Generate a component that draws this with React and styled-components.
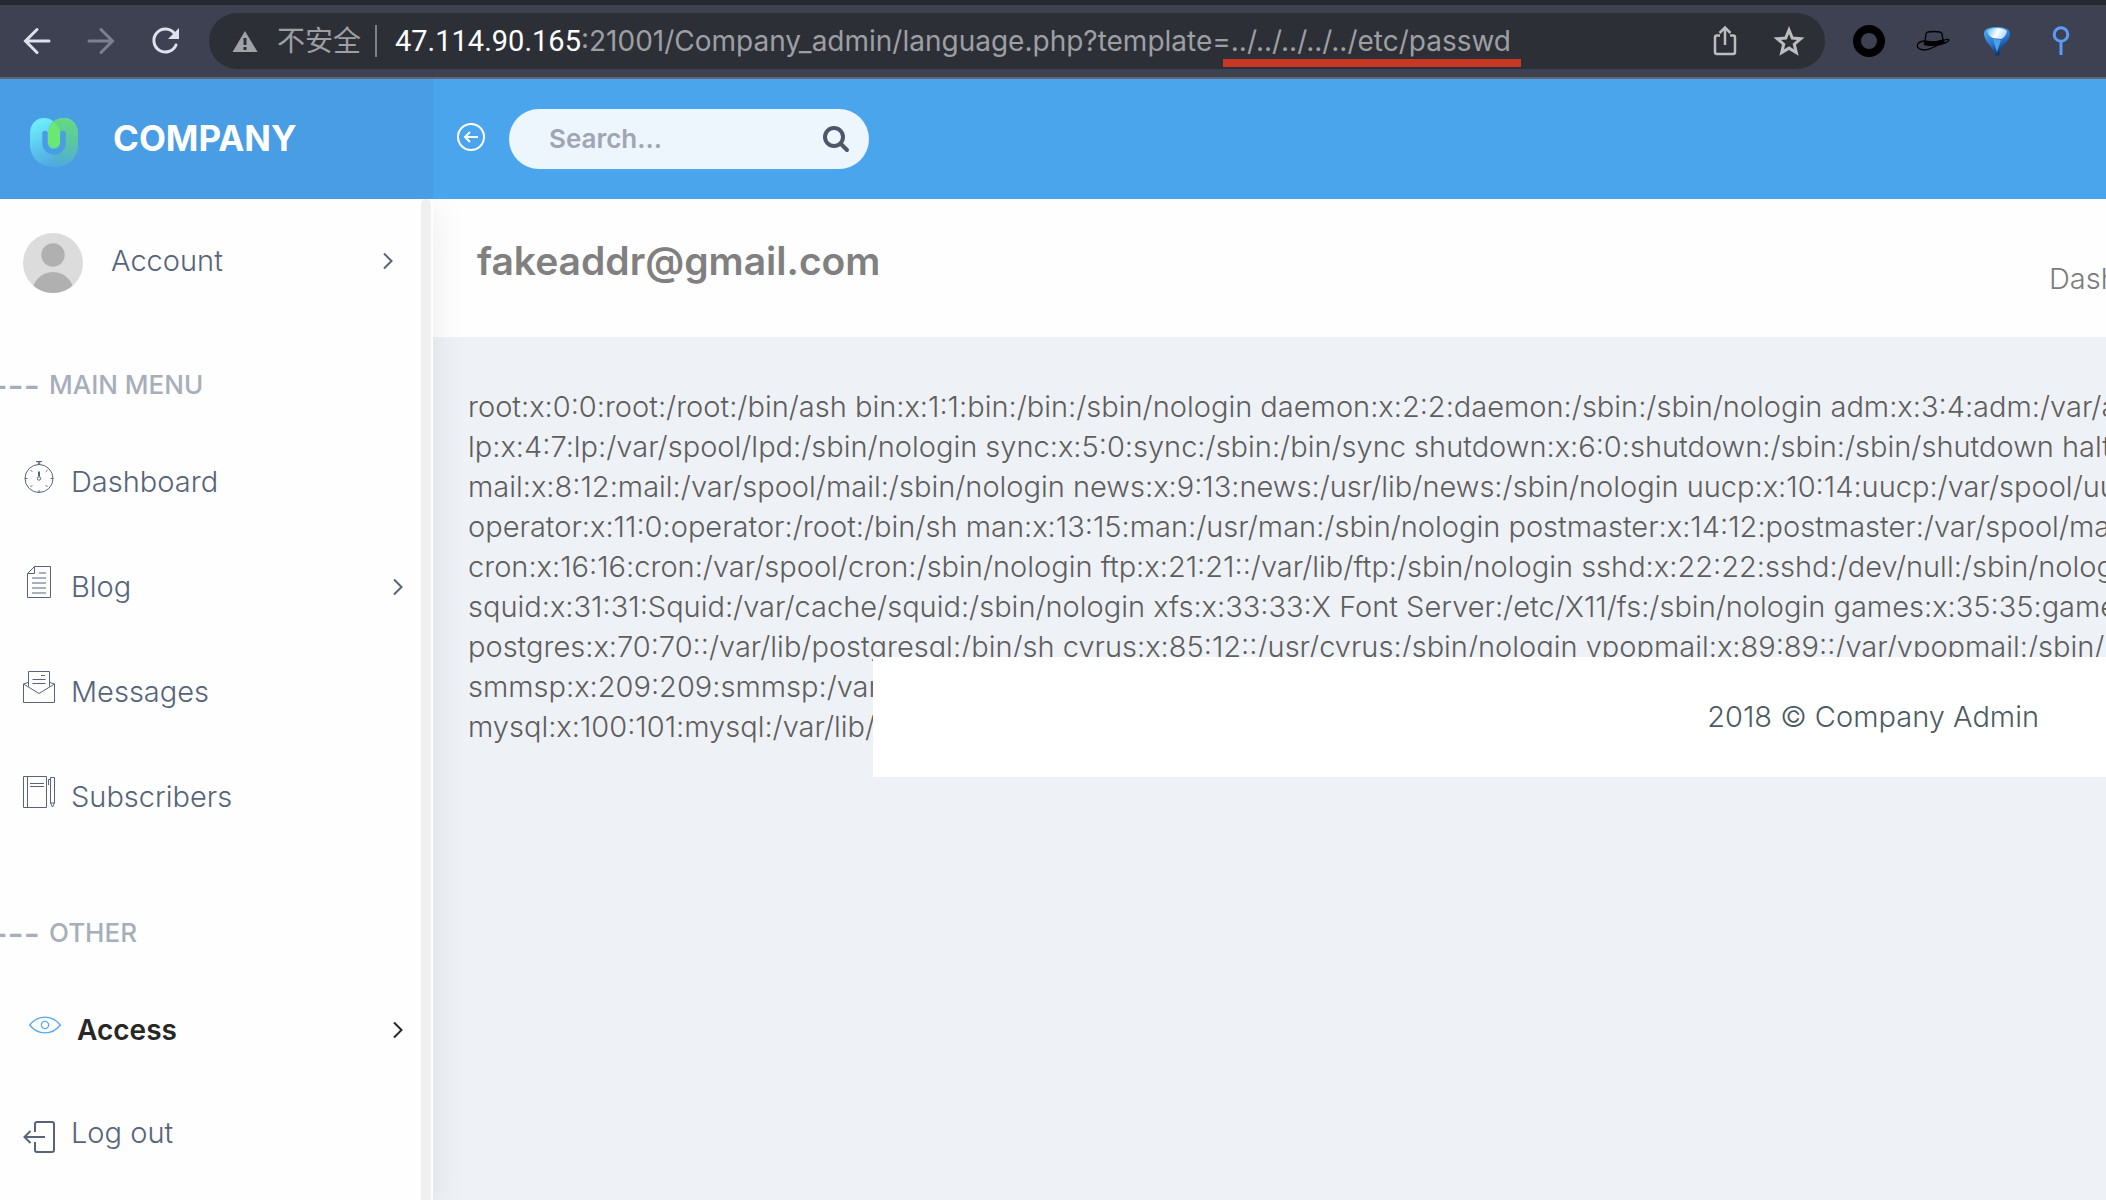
import React from "react";
import styled, { createGlobalStyle } from "styled-components";

const GlobalStyle = createGlobalStyle`
  *, *::before, *::after { box-sizing: border-box; }
  body {
    margin: 0;
    overflow: hidden;
    background: #eef1f6;
    font-family: Inter, "Noto Sans CJK SC", sans-serif;
    font-size: 29px;
    font-weight: 300;
    line-height: 40px;
  }
  a { color: inherit; text-decoration: none; }
  svg { display: block; flex: none; }
`;

const Page = styled.div`
  display: flex;
  flex-direction: column;
  min-height: 100vh;
  overflow: hidden;
`;

const IconButton = styled.button`
  display: flex;
  align-items: center;
  justify-content: center;
  flex: none;
  width: ${(p) => p.$width || 64}px;
  height: 56px;
  padding: 0;
  border: 0;
  background: none;
  color: ${(p) => p.$color || "#dfe1ec"};
`;

/* Browser chrome */
const BrowserBar = styled.div`
  display: flex;
  align-items: center;
  height: 79px;
  padding: 0 13px 0 5px;
  gap: 12px;
  border-top: 5px solid #252931;
  border-bottom: 2px solid #62676f;
  background: #3d4152;
`;

const ButtonGroup = styled.div`
  display: flex;
  flex: none;
`;

const AddressBar = styled.div`
  display: flex;
  align-items: center;
  flex: 1;
  min-width: 0;
  height: 56px;
  padding: 0 4px 0 23px;
  border-radius: 28px;
  background: #2d2f37;
  color: #9d9fa2;
  font-size: 28px;
  font-weight: 400;
  white-space: nowrap;
`;

const Insecure = styled.span`
  margin-left: 19px;
  padding-right: 14px;
`;

const Separator = styled.span`
  width: 2px;
  height: 32px;
  margin-right: 18px;
  background: #7f8186;
`;

const Url = styled.div`
  flex: 1;
  min-width: 0;
`;

const Host = styled.span`
  color: #fff;
  font-family: Roboto, sans-serif;
  font-size: 29px;
`;

const Marked = styled.span`
  position: relative;
  &::after {
    content: "";
    position: absolute;
    left: -8px;
    right: -10px;
    bottom: -9px;
    height: 8px;
    background: #c83624;
  }
`;

/* Site header */
const Header = styled.header`
  display: flex;
  height: 120px;
  background: #4ba5ed;
  color: #fff;
`;

const Brand = styled.a`
  display: flex;
  align-items: center;
  flex: none;
  gap: 35px;
  width: 433px;
  padding-left: 30px;
  background: #489de4;
  font-size: 35px;
  font-weight: 700;
`;

const BrandMark = styled.span`
  padding-top: 6px;
`;

const BrandName = styled.span`
  padding-bottom: 2px;
`;

const HeaderTools = styled.div`
  display: flex;
  align-items: center;
  flex: 1;
  gap: 24px;
  padding-left: 24px;
`;

const CollapseButton = styled(IconButton)`
  padding-bottom: 4px;
`;

const SearchForm = styled.form`
  display: flex;
  align-items: center;
  width: 360px;
  height: 60px;
  padding-left: 40px;
  border-radius: 30px;
  background: #edf5fd;
`;

const SearchInput = styled.input`
  flex: 1;
  min-width: 0;
  padding: 0 0 2px;
  border: 0;
  outline: 0;
  background: none;
  color: #50586c;
  font-family: inherit;
  font-size: 26px;
  font-weight: 600;
  &::placeholder { color: #9fa5b4; opacity: 1; }
`;

/* Body */
const Body = styled.div`
  display: flex;
  flex: 1;
`;

const Sidebar = styled.aside`
  display: flex;
  flex: none;
  width: 433px;
  z-index: 1;
  padding-right: 2px;
  background: #fefefe;
  box-shadow: 0 10px 36px rgba(0, 0, 0, 0.08);
  clip-path: inset(0 -60px 0 0);
`;

const Track = styled.div`
  width: 10px;
  border-radius: 5px 5px 0 0;
  background: #f0f0f0;
`;

const Nav = styled.nav`
  flex: 1;
  color: #56647a;
`;

const AccountLink = styled.a`
  display: flex;
  align-items: center;
  gap: 28px;
  height: 128px;
  padding: 0 27px 0 23px;
`;

const AccountRow = styled.span`
  display: flex;
  align-items: center;
  justify-content: space-between;
  flex: 1;
  padding-bottom: 4px;
`;

const Caption = styled.h2`
  display: flex;
  gap: 9px;
  margin: ${(p) => p.$top}px 0 24px;
  color: #a7aebb;
  font-size: 26px;
  font-weight: 500;
  line-height: 40px;
`;

const Dashes = styled.span`
  display: flex;
  justify-content: flex-end;
  width: 40px;
  font-size: 35px;
  white-space: nowrap;
`;

const MenuLink = styled.a`
  display: flex;
  align-items: center;
  gap: 16px;
  height: ${(p) => (p.$low ? 101 : 105)}px;
  padding: 0 17px 0 ${(p) => (p.$active ? 29 : 23)}px;
  color: ${(p) => (p.$active ? "#272727" : "inherit")};
  font-size: ${(p) => (p.$active ? 28 : 29)}px;
  font-weight: ${(p) => (p.$active ? 600 : 300)};
`;

const MenuIcon = styled.span`
  padding: ${(p) => (p.$low ? "8px 0 0" : "0 0 10px")};
  color: ${(p) => (p.$active ? "#55aaf0" : "inherit")};
`;

const MenuLabel = styled.span`
  flex: 1;
`;

const Main = styled.main`
  position: relative;
  flex: 1;
  min-width: 0;
  overflow: hidden;
`;

const TitleBar = styled.div`
  display: flex;
  align-items: center;
  justify-content: space-between;
  height: 138px;
  padding-left: 44px;
  background: #fefefe;
`;

const Title = styled.h1`
  margin: 0;
  padding-bottom: 14px;
  color: #808080;
  font-size: 39px;
  font-weight: 600;
`;

const Breadcrumb = styled.a`
  width: 57px;
  padding-top: 22px;
  overflow: hidden;
  color: #7c7c7c;
  white-space: nowrap;
`;

const FileDump = styled.div`
  padding: 50px 0 0 35px;
  color: #5e5e5e;
  white-space: nowrap;
`;

const Footer = styled.footer`
  position: absolute;
  top: 458px;
  left: 440px;
  right: 0;
  display: flex;
  align-items: center;
  justify-content: flex-end;
  height: 120px;
  padding-right: 67px;
  background: #fff;
  color: #4c5a63;
`;

const Stroke = ({ w = 32, h = 32, sw = 1, children, ...rest }) => (
  <svg width={w} height={h} viewBox={`0 0 ${w} ${h}`} fill="none" stroke="currentColor" strokeWidth={sw} aria-hidden="true" {...rest}>
    {children}
  </svg>
);

const Chevron = () => (
  <Stroke w={12} h={20} sw={2}><path d="M2 2.5 9.5 10 2 17.5" /></Stroke>
);

const Stopwatch = () => (
  <Stroke>
    <circle cx="16" cy="17.5" r="14" />
    <path d="M13 .5h6M15.3 1v3M16.7 1v3M15.5 10.500v5M16.500 10.500v5M2 17.500h2.500M27.500 17.500H30M16 29v2.500M7.500 9l1.800 1.800M24.500 9l-1.800 1.800M7.500 26l1.800-1.800M24.500 26l-1.800-1.800" />
    <circle cx="16" cy="17.500" r="1.700" />
  </Stroke>
);

const FilePage = () => (
  <Stroke>
    <path d="M11.500.5h16v31h-23V7.500zM11.500.5v7h-7" />
    <path d="M16 7h7M9 12h14M9 17h14M9 22h14M9 27h14" strokeWidth="2" opacity=".5" />
  </Stroke>
);

const OpenMail = () => (
  <Stroke>
    <path d="M5.500 15.500V.5h21v15M5 11.500 .5 13v18.500h31V13L27 11.500M.5 13 16 22.500 31.500 13M18 4.500h4M9.500 8.500h13M9.500 12.500h13" />
  </Stroke>
);

const Notebook = () => (
  <Stroke>
    <path d="M.5.5h23v31H.5zM4.500.5v31M7 7.500h14M7 10.500h14M27.500 1.500h4V27l-2 4-2-4zM25.500 9V3.500h2M27.500 27h4" />
  </Stroke>
);

const Eye = () => (
  <Stroke sw={1.3}>
    <path d="M.7 16C9 5.500 23 5.500 31.300 16 23 26.500 9 26.500 .7 16z" />
    <circle cx="16" cy="16" r="3.600" />
  </Stroke>
);

const Exit = () => (
  <Stroke sw={2}>
    <path d="M12 11V3q0-2 2-2h15q2 0 2 2v26q0 2-2 2H14q-2 0-2-2v-8M22 16H1.500M7.500 10l-6 6 6 6" />
  </Stroke>
);

const Avatar = () => (
  <svg width="60" height="60" viewBox="0 0 60 60" role="img" aria-label="Avatar">
    <clipPath id="avatarClip"><circle cx="30" cy="30" r="30" /></clipPath>
    <g clipPath="url(#avatarClip)">
      <rect width="60" height="60" fill="#dcdcdc" />
      <circle cx="30" cy="22" r="11.700" fill="#b0b0b0" />
      <circle cx="30" cy="60" r="21" fill="#b0b0b0" />
    </g>
  </svg>
);

const Logo = () => (
  <svg width="48" height="49" viewBox="0 0 48 49" fill="none" aria-hidden="true">
    <defs>
      <linearGradient id="logoBody" x1="10" y1="4" x2="26" y2="46" gradientUnits="userSpaceOnUse">
        <stop stopColor="#6cecfa" />
        <stop offset=".5" stopColor="#5cc8ee" />
        <stop offset="1" stopColor="#4fa9e0" />
      </linearGradient>
      <linearGradient id="logoArm" x1="36" y1="2" x2="32" y2="48" gradientUnits="userSpaceOnUse">
        <stop stopColor="#64d884" />
        <stop offset=".5" stopColor="#5bc4a4" />
        <stop offset="1" stopColor="#50abdb" />
      </linearGradient>
    </defs>
    <path d="M0 16C0 6 6 0 14 0q6 0 10 4 4-4 10-4c8 0 14 6 14 16v10c0 14-10 23-24 23S0 40 0 26z" fill="url(#logoBody)" />
    <path d="M18 24V16C18 6 25 0 33 0c9 0 15 6 15 16v10c0 14-10 23-24 23V32z" fill="url(#logoArm)" />
    <path d="M18 15q1-7 6-11 6 4 6 12v8a6 6 0 0 1-12 0z" fill="#6be873" />
    <path d="M15 15.500V25a9 9 0 0 0 18 0v-9.500" stroke="#489de4" strokeWidth="5.500" strokeLinecap="round" />
  </svg>
);

const BackArrow = () => (
  <Stroke w={28} sw={3} strokeLinecap="round"><path d="M26 16H3M14 4.500 2.500 16 14 27.500" /></Stroke>
);

const Reload = () => (
  <Stroke sw={3}>
    <path d="M27 20A11.500 11.500 0 1 1 25.500 8.500" strokeLinecap="round" />
    <path d="M30 3v11H19z" fill="currentColor" stroke="none" />
  </Stroke>
);

const Warning = () => (
  <svg width="26" height="24" viewBox="0 0 26 24" aria-hidden="true">
    <path d="M13 2 25.500 23H.5z" fill="#a0a2a5" />
    <path d="M13 9v7M13 18v3" stroke="#2d2f37" strokeWidth="3" />
  </svg>
);

const Share = () => (
  <Stroke w={24} sw={2.5}>
    <path d="M7 10.500H4q-2 0-2 2V27q0 2 2 2h16q2 0 2-2V12.500q0-2-2-2h-3M12 20V3M6.500 8 12 2.500 17.500 8" />
  </Stroke>
);

const Star = () => (
  <Stroke sw={3}>
    <path d="m16 5 3.300 8 8.500.7-6.500 5.500 2 8.400L16 23.100l-7.300 4.500 2-8.400-6.500-5.500 8.500-.7z" />
  </Stroke>
);

const Ring = () => (
  <svg width="32" height="32" viewBox="0 0 32 32" aria-hidden="true">
    <circle cx="16" cy="16" r="12" fill="none" stroke="#000" strokeWidth="8" />
  </svg>
);

const Hat = () => (
  <svg width="34" height="24" viewBox="0 0 34 24" fill="none" stroke="#000" strokeWidth="1.300" aria-hidden="true">
    <path d="M9 13 10 5q.3-2 2-2 6-1 12 0 1.500.2 1.800 1.500L27.500 13" />
    <path d="M8.500 12q9 2 18.500-1l1 3q-8 4-19.500 1.500z" fill="#000" />
    <path d="M8 12C1 13 0 17 3 19.500c6 4 14-1 20-4 5-1 9-2 10-4.500-1-1-3-.5-5.500.5" />
  </svg>
);

const Balloon = () => (
  <svg width="28" height="32" viewBox="0 0 28 32" aria-hidden="true">
    <defs>
      <linearGradient id="balloonShade" x1="4" y1="4" x2="18" y2="30" gradientUnits="userSpaceOnUse">
        <stop stopColor="#4aaaf0" />
        <stop offset=".55" stopColor="#2a74cc" />
        <stop offset="1" stopColor="#0a2a58" />
      </linearGradient>
      <linearGradient id="balloonTop" x1="6" y1="4" x2="22" y2="12" gradientUnits="userSpaceOnUse">
        <stop stopColor="#7cc6f8" />
        <stop offset=".5" stopColor="#fff" />
        <stop offset="1" stopColor="#a8d8fa" />
      </linearGradient>
    </defs>
    <path d="M1 9C1 4 6 2 14 2s13 2 13 7c0 5-4 9-7 13-2 3-3 4-3.500 6v2q-2.500 1-5 0v-2C11 26 10 25 8 22 5 18 1 14 1 9z" fill="url(#balloonShade)" />
    <path d="M4 6Q7 3 14 3t10 3q-1 6-6 8l-8-1Q5 11 4 6z" fill="url(#balloonTop)" />
    <path d="M10 14l4 13 4-12z" fill="#4f9fe8" />
  </svg>
);

const Pin = () => (
  <Stroke w={20} sw={3}><circle cx="10" cy="9.500" r="6.800" /><path d="M10 16v14" /></Stroke>
);

const CircleArrow = () => (
  <Stroke w={28} h={28} sw={2}>
    <circle cx="14" cy="14" r="13" />
    <path d="M21 14H8M13 9l-5 5 5 5" />
  </Stroke>
);

const SearchIcon = () => (
  <Stroke w={28} h={28} sw={4} strokeLinecap="round">
    <circle cx="12" cy="12" r="9" /><path d="m19 19 6 6" />
  </Stroke>
);

const Flipped = styled.span`
  display: block;
  transform: rotate(180deg);
`;

const mainMenu = [
  { label: "Dashboard", Icon: Stopwatch },
  { label: "Blog", Icon: FilePage, more: true },
  { label: "Messages", Icon: OpenMail },
  { label: "Subscribers", Icon: Notebook },
];

const otherMenu = [
  { label: "Access", Icon: Eye, more: true, active: true },
  { label: "Log out", Icon: Exit, low: true },
];

const fileLines = [
  "root:x:0:0:root:/root:/bin/ash bin:x:1:1:bin:/bin:/sbin/nologin daemon:x:2:2:daemon:/sbin:/sbin/nologin adm:x:3:4:adm:/var/adm:/sbin/nologin",
  "lp:x:4:7:lp:/var/spool/lpd:/sbin/nologin sync:x:5:0:sync:/sbin:/bin/sync shutdown:x:6:0:shutdown:/sbin:/sbin/shutdown halt:x:7:0:halt:/sbin:/sbin/halt",
  "mail:x:8:12:mail:/var/spool/mail:/sbin/nologin news:x:9:13:news:/usr/lib/news:/sbin/nologin uucp:x:10:14:uucp:/var/spool/uucppublic:/sbin/nologin",
  "operator:x:11:0:operator:/root:/bin/sh man:x:13:15:man:/usr/man:/sbin/nologin postmaster:x:14:12:postmaster:/var/spool/mail:/sbin/nologin",
  "cron:x:16:16:cron:/var/spool/cron:/sbin/nologin ftp:x:21:21::/var/lib/ftp:/sbin/nologin sshd:x:22:22:sshd:/dev/null:/sbin/nologin",
  "squid:x:31:31:Squid:/var/cache/squid:/sbin/nologin xfs:x:33:33:X Font Server:/etc/X11/fs:/sbin/nologin games:x:35:35:games:/usr/games:/sbin/nologin",
  "postgres:x:70:70::/var/lib/postgresql:/bin/sh cyrus:x:85:12::/usr/cyrus:/sbin/nologin vpopmail:x:89:89::/var/vpopmail:/sbin/nologin",
  "smmsp:x:209:209:smmsp:/var/spool/mqueue:/sbin/nologin",
  "mysql:x:100:101:mysql:/var/lib/mysql:/sbin/nologin",
];

const Menu = ({ items }) =>
  items.map(({ label, Icon, more, active, low }) => (
    <MenuLink key={label} href="#" $active={active} $low={low}>
      <MenuIcon $active={active} $low={low}><Icon /></MenuIcon>
      <MenuLabel>{label}</MenuLabel>
      {more && <Chevron />}
    </MenuLink>
  ));

export default function App() {
  return (
    <Page>
      <GlobalStyle />
      <BrowserBar>
        <ButtonGroup>
          <IconButton aria-label="Back"><BackArrow /></IconButton>
          <IconButton aria-label="Forward" $color="#7d808e"><Flipped><BackArrow /></Flipped></IconButton>
          <IconButton aria-label="Reload"><Reload /></IconButton>
        </ButtonGroup>
        <AddressBar>
          <Warning />
          <Insecure>不安全</Insecure>
          <Separator />
          <Url>
            <Host>47.114.90.165</Host>:21001/Company_admin/language.php?template=<Marked>../../../../../etc/passwd</Marked>
          </Url>
          <IconButton aria-label="Share" $color="#bdbdbf"><Share /></IconButton>
          <IconButton aria-label="Bookmark" $color="#bdbdbf"><Star /></IconButton>
        </AddressBar>
        <ButtonGroup>
          <IconButton aria-label="Ring extension"><Ring /></IconButton>
          <IconButton aria-label="Hat extension"><Hat /></IconButton>
          <IconButton aria-label="Balloon extension"><Balloon /></IconButton>
          <IconButton aria-label="Pin extension" $color="#5b9bf8"><Pin /></IconButton>
        </ButtonGroup>
      </BrowserBar>

      <Header>
        <Brand href="#">
          <BrandMark><Logo /></BrandMark>
          <BrandName>COMPANY</BrandName>
        </Brand>
        <HeaderTools>
          <CollapseButton aria-label="Collapse menu" $width={28} $color="#fff"><CircleArrow /></CollapseButton>
          <SearchForm role="search">
            <SearchInput type="text" placeholder="Search..." aria-label="Search" />
            <IconButton type="submit" aria-label="Submit search" $width={66} $color="#50566a"><SearchIcon /></IconButton>
          </SearchForm>
        </HeaderTools>
      </Header>

      <Body>
        <Sidebar>
          <Nav>
            <AccountLink href="#">
              <Avatar />
              <AccountRow>Account<Chevron /></AccountRow>
            </AccountLink>
            <Caption $top={38}><Dashes>---</Dashes>MAIN MENU</Caption>
            <Menu items={mainMenu} />
            <Caption $top={64}><Dashes>---</Dashes>OTHER</Caption>
            <Menu items={otherMenu} />
          </Nav>
          <Track />
        </Sidebar>
        <Main>
          <TitleBar>
            <Title>fakeaddr@gmail.com</Title>
            <Breadcrumb href="#">Dashboard</Breadcrumb>
          </TitleBar>
          <FileDump>
            {fileLines.map((line) => <div key={line}>{line}</div>)}
          </FileDump>
          <Footer>2018 © Company Admin</Footer>
        </Main>
      </Body>
    </Page>
  );
}
